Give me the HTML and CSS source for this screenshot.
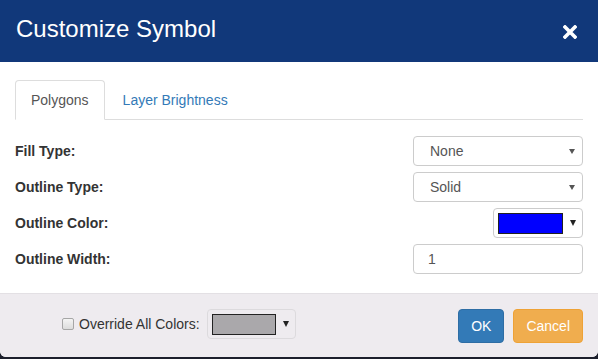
FILE: index.html
```html
<!DOCTYPE html>
<html lang="en">
<head>
<meta charset="utf-8">
<title>Customize Symbol</title>
<link rel="stylesheet" href="styles.css">
</head>
<body>
<div class="modal">
  <div class="modal-header">
    <h4 class="modal-title">Customize Symbol</h4>
    <button class="close" type="button" aria-label="Close">
      <svg width="14" height="14" viewBox="0 0 14 14"><path d="M2 2 L12 12 M12 2 L2 12" stroke="#fff" stroke-width="3.6" stroke-linecap="square"/></svg>
    </button>
  </div>
  <div class="modal-body">
    <ul class="tabs">
      <li class="tab active"><a>Polygons</a></li>
      <li class="tab"><a>Layer Brightness</a></li>
    </ul>
    <div class="form">
      <div class="row">
        <label class="label">Fill Type:</label>
        <div class="select-wrap"><select class="control"><option>None</option></select></div>
      </div>
      <div class="row">
        <label class="label">Outline Type:</label>
        <div class="select-wrap"><select class="control"><option>Solid</option></select></div>
      </div>
      <div class="row">
        <label class="label">Outline Color:</label>
        <div class="picker"><span class="swatch swatch-blue"></span><span class="caret"></span></div>
      </div>
      <div class="row">
        <label class="label">Outline Width:</label>
        <input class="control text-input" type="text" value="1">
      </div>
    </div>
  </div>
  <div class="modal-footer">
    <div class="override">
      <input class="check" type="checkbox">
      <span class="override-label">Override All Colors:</span>
      <div class="picker picker-small"><span class="swatch swatch-gray"></span><span class="caret"></span></div>
    </div>
    <div class="buttons">
      <button class="btn btn-ok" type="button">OK</button>
      <button class="btn btn-cancel" type="button">Cancel</button>
    </div>
  </div>
</div>
</body>
</html>
```

FILE: styles.css
```css
* { box-sizing: border-box; }
html, body { margin: 0; padding: 0; }
body {
  width: 598px;
  height: 359px;
  background: #1c1f2c;
  font-family: "Liberation Sans", Arial, sans-serif;
  font-size: 14px;
  color: #333;
  overflow: hidden;
}
.modal {
  width: 598px;
  height: 357px;
  background: #fff;
  border-radius: 0 0 6px 6px;
  overflow: hidden;
  display: flex;
  flex-direction: column;
}
.modal-header {
  height: 62px;
  background: #11387a;
  display: flex;
  align-items: flex-start;
  padding: 13px 21px 17px 16px;
}
.modal-title {
  margin: 0;
  font-size: 24px;
  line-height: 32px;
  font-weight: normal;
  color: #fff;
}
.close {
  margin-left: auto;
  margin-top: 12px;
  padding: 0;
  border: 0;
  background: none;
  width: 14px;
  height: 14px;
  display: block;
}
.close svg { display: block; }
.modal-body {
  flex: 1;
  padding: 18px 15px 0 15px;
}
.tabs {
  list-style: none;
  margin: 0;
  padding: 0;
  display: flex;
  border-bottom: 1px solid #ddd;
  height: 40px;
}
.tab {
  margin-right: 2px;
  margin-bottom: -1px;
}
.tab a {
  display: block;
  padding: 9px 15px;
  line-height: 20px;
  border: 1px solid transparent;
  border-radius: 4px 4px 0 0;
  color: #337ab7;
}
.tab.active a {
  color: #555;
  background: #fff;
  border-color: #ddd #ddd transparent #ddd;
}
.form {
  margin-top: 16px;
  display: flex;
  flex-direction: column;
  gap: 6px;
}
.row {
  height: 30px;
  display: flex;
  align-items: center;
  justify-content: space-between;
}
.label {
  font-weight: bold;
  font-size: 14px;
  color: #333;
}
.select-wrap {
  position: relative;
  width: 170px;
  height: 30px;
}
.select-wrap::after {
  content: "";
  position: absolute;
  right: 8px;
  top: 13px;
  border-left: 3px solid transparent;
  border-right: 3px solid transparent;
  border-top: 5px solid #555;
  pointer-events: none;
}
.control {
  width: 170px;
  height: 30px;
  border: 1px solid #ccc;
  border-radius: 4px;
  background: #fff;
  font-family: "Liberation Sans", Arial, sans-serif;
  font-size: 14px;
  color: #555;
  padding: 0 16px;
  margin: 0;
  outline: none;
}
select.control {
  -webkit-appearance: none;
  appearance: none;
}
.text-input { padding-left: 14px; color: #555; }
.picker {
  width: 90px;
  height: 30px;
  border: 1px solid #ccc;
  border-radius: 4px;
  background: #fff;
  display: flex;
  align-items: center;
  padding-left: 4px;
}
.swatch {
  display: block;
  width: 65px;
  height: 21px;
  border: 1px solid #222;
}
.swatch-blue { background: #0000ff; }
.swatch-gray { background: #aaa8ab; width: 64px; }
.caret {
  margin-left: 7px;
  border-left: 3px solid transparent;
  border-right: 3px solid transparent;
  border-top: 6px solid #222;
}
.modal-footer {
  height: 64px;
  background: #eeebef;
  border-top: 1px solid #e3e0e4;
  display: flex;
  align-items: flex-start;
  justify-content: space-between;
  padding: 15px 15px 0 62px;
}
.override {
  display: flex;
  align-items: center;
  height: 30px;
}
.check {
  -webkit-appearance: none;
  appearance: none;
  width: 12px;
  height: 12px;
  margin: 0 5px 0 0;
  border: 1px solid #a6a6a6;
  border-radius: 2px;
  background: linear-gradient(#f4f4f4, #dcdcdc);
}
.override-label {
  color: #333;
  margin-right: 7px;
}
.picker-small {
  width: 89px;
  border-color: #dcdadd;
  background: #eeebef;
}
.buttons {
  display: flex;
  gap: 9px;
}
.btn {
  height: 34px;
  padding: 6px 12px;
  font-family: "Liberation Sans", Arial, sans-serif;
  font-size: 14px;
  line-height: 20px;
  color: #fff;
  border: 1px solid transparent;
  border-radius: 4px;
}
.btn-ok { background: #337ab7; border-color: #2e6da4; }
.btn-cancel { background: #f0ad4e; border-color: #eea236; }
```
